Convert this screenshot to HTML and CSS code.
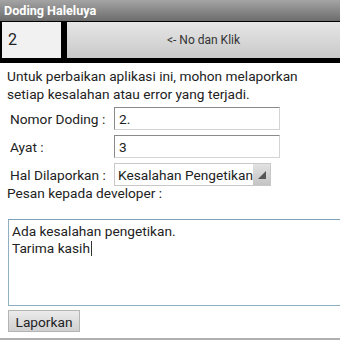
FILE: index.html
```html
<!DOCTYPE html>
<html lang="id">

<head>
    <meta charset="UTF-8">
    <meta name="viewport" content="width=device-width, initial-scale=1.0">
    <title>Doding Haleluya</title>
    <link rel="stylesheet" href="styles.css">
</head>

<body>
    <div class="titlebar">Doding Haleluya</div>

    <div class="toolbar">
        <div class="num">2</div>
        <div class="go">&lt;- No dan Klik</div>
    </div>

    <div class="form">
        <p class="intro">Untuk perbaikan aplikasi ini, mohon melaporkan<br>setiap kesalahan atau error yang terjadi.</p>

        <div class="row">
            <span class="lbl">Nomor Doding :</span>
            <div class="field">2.</div>
        </div>
        <div class="row">
            <span class="lbl">Ayat :</span>
            <div class="field">3</div>
        </div>
        <div class="row">
            <span class="lbl">Hal Dilaporkan :</span>
            <div class="select">
                <span class="select-text">Kesalahan Pengetikan</span>
                <span class="arrow"><svg width="10" height="10" viewBox="0 0 10 10"><polygon points="9,1 9,9 1,9" fill="#555"/></svg></span>
            </div>
        </div>

        <p class="pesan">Pesan kepada developer :</p>

        <div class="message">Ada kesalahan pengetikan.<br>Tarima kasih<span class="caret"></span></div>

        <div class="send">Laporkan</div>
    </div>
</body>

</html>
```

FILE: styles.css
```css
body {
    margin: 0;
    font-family: Roboto, 'Noto Sans', sans-serif;
    color: #222;
    background: #fff;
    width: 340px;
    height: 340px;
    overflow: hidden;
    border-bottom: 2px solid #b0b0b0;
    box-sizing: border-box;
}

.titlebar {
    height: 21px;
    line-height: 21px;
    padding-left: 4px;
    font-size: 12.6px;
    font-weight: bold;
    color: #fff;
    background: linear-gradient(to bottom, #a4a4a4, #6c6c6c);
}

.toolbar {
    display: flex;
    gap: 6px;
    background: #000;
    padding: 1px 0 5px 2px;
}

.num {
    width: 59px;
    height: 36px;
    line-height: 36px;
    padding-left: 6px;
    box-sizing: border-box;
    font-size: 16px;
    background: #f1f1f1;
}

.go {
    flex: 1;
    height: 36px;
    line-height: 36px;
    text-align: center;
    font-size: 12px;
    color: #333;
    background: linear-gradient(to bottom, #e6e6e6, #c9c9c9);
}

.form {
    padding: 4px 0 0 7px;
}

.intro {
    margin: 0 0 4px;
    font-size: 13.7px;
    line-height: 18px;
}

.row {
    display: flex;
    align-items: center;
    height: 23px;
    margin-bottom: 5px;
}

.lbl {
    width: 107px;
    padding-left: 3px;
    box-sizing: border-box;
    font-size: 13.7px;
}

.field {
    width: 166px;
    height: 23px;
    line-height: 22px;
    padding-left: 4px;
    box-sizing: border-box;
    font-size: 13.7px;
    border: 1px solid #d4d4d4;
    border-top-color: #8a8a8a;
    border-left-color: #8a8a8a;
}

.select {
    display: flex;
    align-items: center;
    width: 157px;
    height: 23px;
    box-sizing: border-box;
    border: 1px solid #c8c8c8;
    font-size: 13.7px;
    overflow: hidden;
}

.select-text {
    flex: 1;
    padding-left: 3px;
    white-space: nowrap;
    overflow: hidden;
}

.arrow {
    display: flex;
    align-items: center;
    justify-content: center;
    flex: none;
    width: 17px;
    height: 21px;
    background: linear-gradient(to bottom, #e2e2e2, #c4c4c4);
}

.pesan {
    margin: -6px 0 0;
    font-size: 13.7px;
    line-height: 17px;
}

.message {
    margin: 17px -10px 0 1px;
    height: 87px;
    padding: 3px 3px;
    box-sizing: border-box;
    font-size: 13.7px;
    line-height: 17px;
    border: 1px solid #8fb0c0;
    border-top-color: #7fa3b6;
}

.caret {
    display: inline-block;
    width: 1px;
    height: 15px;
    margin-left: 1px;
    vertical-align: -3px;
    background: #333;
}

.send {
    display: inline-block;
    margin: 4px 0 0 1px;
    width: 72px;
    height: 22px;
    line-height: 22px;
    text-align: center;
    box-sizing: border-box;
    font-size: 13.7px;
    border: 1px solid #b4b4b4;
    background: linear-gradient(to bottom, #ebebeb, #d0d0d0);
}
```
